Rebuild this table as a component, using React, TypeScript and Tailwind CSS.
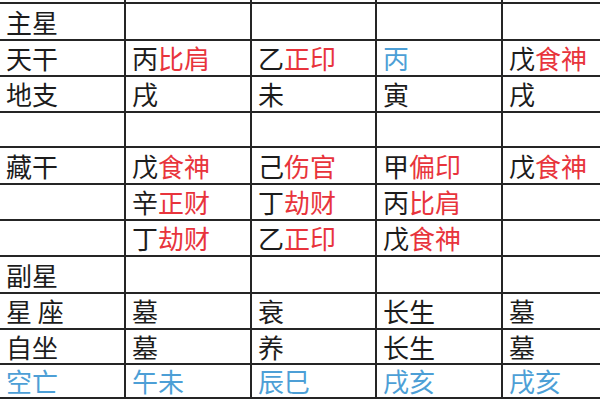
const RED = "text-[#e8343c]";
const BLUE = "text-[#4d9fd6]";

type Seg = { t: string; c?: "r" | "b" };
type Row = { h: string; cells: Seg[][] };

const s = (t: string, c?: "r" | "b"): Seg => ({ t, c });

const rows: Row[] = [
  { h: "h-[37px]", cells: [[s("主星")], [], [], [], []] },
  {
    h: "h-[36px]",
    cells: [
      [s("天干")],
      [s("丙"), s("比肩", "r")],
      [s("乙"), s("正印", "r")],
      [s("丙", "b")],
      [s("戊"), s("食神", "r")],
    ],
  },
  { h: "h-[36px]", cells: [[s("地支")], [s("戌")], [s("未")], [s("寅")], [s("戌")]] },
  { h: "h-[35px]", cells: [[], [], [], [], []] },
  {
    h: "h-[37px]",
    cells: [
      [s("藏干")],
      [s("戊"), s("食神", "r")],
      [s("己"), s("伤官", "r")],
      [s("甲"), s("偏印", "r")],
      [s("戊"), s("食神", "r")],
    ],
  },
  {
    h: "h-[36px]",
    cells: [[], [s("辛"), s("正财", "r")], [s("丁"), s("劫财", "r")], [s("丙"), s("比肩", "r")], []],
  },
  {
    h: "h-[36px]",
    cells: [[], [s("丁"), s("劫财", "r")], [s("乙"), s("正印", "r")], [s("戊"), s("食神", "r")], []],
  },
  { h: "h-[37px]", cells: [[s("副星")], [], [], [], []] },
  { h: "h-[36px]", cells: [[s("星 座")], [s("墓")], [s("衰")], [s("长生")], [s("墓")]] },
  { h: "h-[35px]", cells: [[s("自坐")], [s("墓")], [s("养")], [s("长生")], [s("墓")]] },
  {
    h: "h-[34px]",
    cells: [[s("空亡", "b")], [s("午未", "b")], [s("辰巳", "b")], [s("戌亥", "b")], [s("戌亥", "b")]],
  },
];

const widths = ["w-[126px]", "w-[126px]", "w-[125px]", "w-[126px]", "w-[126px]"];

export default function App() {
  return (
    <div
      className="w-[600px] h-[400px] overflow-hidden bg-white text-[#1c1c1c] text-[26px] leading-none"
      style={{ fontFamily: '"Noto Sans CJK SC", "Noto Sans", sans-serif' }}
    >
      <div className="flex h-[4px] w-[630px]">
        {widths.map((w, i) => (
          <div key={i} className={`${w} shrink-0 border-r-2 border-b-2 border-[#252525]`} />
        ))}
      </div>
      {rows.map((row, r) => (
        <div key={r} className={`flex ${row.h} w-[630px]`}>
          {row.cells.map((cell, c) => (
            <div
              key={c}
              className={`${widths[c]} shrink-0 flex items-center pl-[6px] border-r-2 border-b-2 border-[#252525] whitespace-pre`}
            >
              {cell.map((seg, k) => (
                <span key={k} className={seg.c === "r" ? RED : seg.c === "b" ? BLUE : ""}>
                  {seg.t}
                </span>
              ))}
            </div>
          ))}
        </div>
      ))}
    </div>
  );
}
